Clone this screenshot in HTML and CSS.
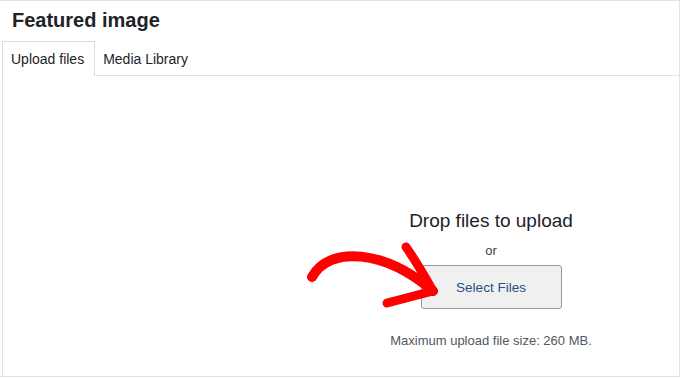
FILE: index.html
```html
<!DOCTYPE html>
<html lang="en">
<head>
<meta charset="utf-8">
<title>Featured image</title>
<link rel="stylesheet" href="styles.css">
</head>
<body>
<div class="frame">
  <h1 class="title">Featured image</h1>
  <div class="router">
    <div class="tabs">
      <span class="tab active">Upload files</span>
      <span class="tab">Media Library</span>
    </div>
    <div class="panel">
      <div class="upload">
        <h2 class="drop">Drop files to upload</h2>
        <p class="or">or</p>
        <button class="select" type="button">Select Files</button>
        <p class="max">Maximum upload file size: 260 MB.</p>
      </div>
    </div>
  </div>
  <svg class="arrow" width="150" height="80" viewBox="0 0 150 80" aria-hidden="true">
    <path d="M12 37 C30 5, 85 10, 133 51" fill="none" stroke="#ff0000" stroke-width="10" stroke-linecap="round"/>
    <path d="M106 7 C116 21, 125 37, 133 51" fill="none" stroke="#ff0000" stroke-width="9" stroke-linecap="round"/>
    <path d="M87 63 L133 51" fill="none" stroke="#ff0000" stroke-width="9" stroke-linecap="round"/>
  </svg>
</div>
</body>
</html>
```

FILE: styles.css
```css
* { box-sizing: border-box; }
html, body { margin: 0; padding: 0; background: #fff; }
body {
  width: 680px;
  height: 378px;
  overflow: hidden;
  font-family: "Liberation Sans", Arial, sans-serif;
  color: #1d2327;
}
.frame {
  position: relative;
  width: 680px;
  height: 377px;
  border-top: 1px solid #e2e2e4;
  border-right: 1px solid #e2e2e4;
  border-bottom: 1px solid #e2e2e4;
  display: flex;
  flex-direction: column;
}
.title {
  margin: 0;
  padding: 7px 0 0 12px;
  font-size: 20px;
  line-height: 24px;
  font-weight: 700;
  height: 40px;
}
.router {
  flex: 1;
  display: flex;
  flex-direction: column;
  margin-left: 2px;
  border-left: 1px solid #e2e2e4;
}
.tabs {
  display: flex;
  height: 35px;
  border-bottom: 1px solid #e2e2e4;
}
.tab {
  display: flex;
  align-items: center;
  padding: 0 10px 0 8px;
  font-size: 14px;
  color: #1d2327;
  border: 1px solid transparent;
  border-bottom: none;
  margin-left: -1px;
}
.tab.active {
  border-color: #dcdcde;
  background: #fff;
  height: 35px;
  margin-bottom: -1px;
}
.panel {
  flex: 1;
  padding: 132px 0 0 300px;
}
.upload {
  display: flex;
  flex-direction: column;
  align-items: center;
}
.drop {
  margin: 0;
  font-size: 19px;
  line-height: 26px;
  font-weight: 400;
  color: #1d2327;
}
.or {
  margin: 8px 0 0;
  font-size: 13px;
  line-height: 18px;
  color: #3c434a;
}
.select {
  margin-top: 5px;
  width: 141px;
  height: 44px;
  border: 1px solid #8c9bb0;
  border-radius: 3px;
  background: #f0f0f1;
  color: #2a4f80;
  font-family: "Liberation Sans", Arial, sans-serif;
  font-size: 13.5px;
  padding: 0;
}
.max {
  margin: 23px 0 0;
  font-size: 13px;
  line-height: 18px;
  color: #50575e;
}
.arrow {
  position: absolute;
  left: 300px;
  top: 239px;
  pointer-events: none;
}
```
